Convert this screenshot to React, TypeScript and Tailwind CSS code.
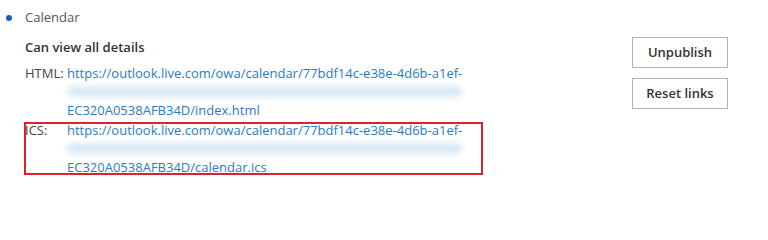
const font = { fontFamily: '"Open Sans", "Noto Sans", sans-serif' };

function LinkBlock({ label, url, tail }: { label: string; url: string; tail: string }) {
  return (
    <div className="flex leading-[18.5px]">
      <span className="w-[42px] shrink-0 text-[#444]">{label}</span>
      <div className="flex flex-col">
        <a className="text-[#2b7bbf]">{url}</a>
        <div className="h-[18.5px] flex items-center">
          <div className="h-[9px] w-[395px] rounded-full bg-[#d2e5f4] blur-[3px]" />
        </div>
        <a className="text-[#2b7bbf]">{tail}</a>
      </div>
    </div>
  );
}

export default function App() {
  return (
    <div className="w-[768px] h-[217px] bg-white flex justify-between pr-[40px] text-[13px] overflow-hidden" style={font}>
      <div className="flex flex-col pt-[8px]">
        <div className="flex items-center h-[20px]">
          <span className="ml-[6px] mr-[13px] h-[6px] w-[6px] rounded-full bg-[#0f62b0]" />
          <span className="text-[#555]">Calendar</span>
        </div>
        <div className="pl-[25px] mt-[9px] font-semibold text-[#333] leading-[20px]">Can view all details</div>
        <div className="pl-[25px] mt-[6.5px]">
          <LinkBlock
            label="HTML:"
            url="https://outlook.live.com/owa/calendar/77bdf14c-e38e-4d6b-a1ef-"
            tail="EC320A0538AFB34D/index.html"
          />
        </div>
        <div className="ml-[24px] mt-[3px] w-[459px] h-[53px] border-2 border-[#d9232d]">
          <div className="-mt-[3.25px] -ml-[1px]">
            <LinkBlock
              label="ICS:"
              url="https://outlook.live.com/owa/calendar/77bdf14c-e38e-4d6b-a1ef-"
              tail="EC320A0538AFB34D/calendar.ics"
            />
          </div>
        </div>
      </div>
      <div className="flex flex-col gap-[10px] pt-[37px]">
        <button className="w-[96px] h-[31px] border border-[#b4b4b4] bg-white text-[#333] font-semibold text-[13px]">Unpublish</button>
        <button className="w-[96px] h-[31px] border border-[#b4b4b4] bg-white text-[#333] font-semibold text-[13px]">Reset links</button>
      </div>
    </div>
  );
}
